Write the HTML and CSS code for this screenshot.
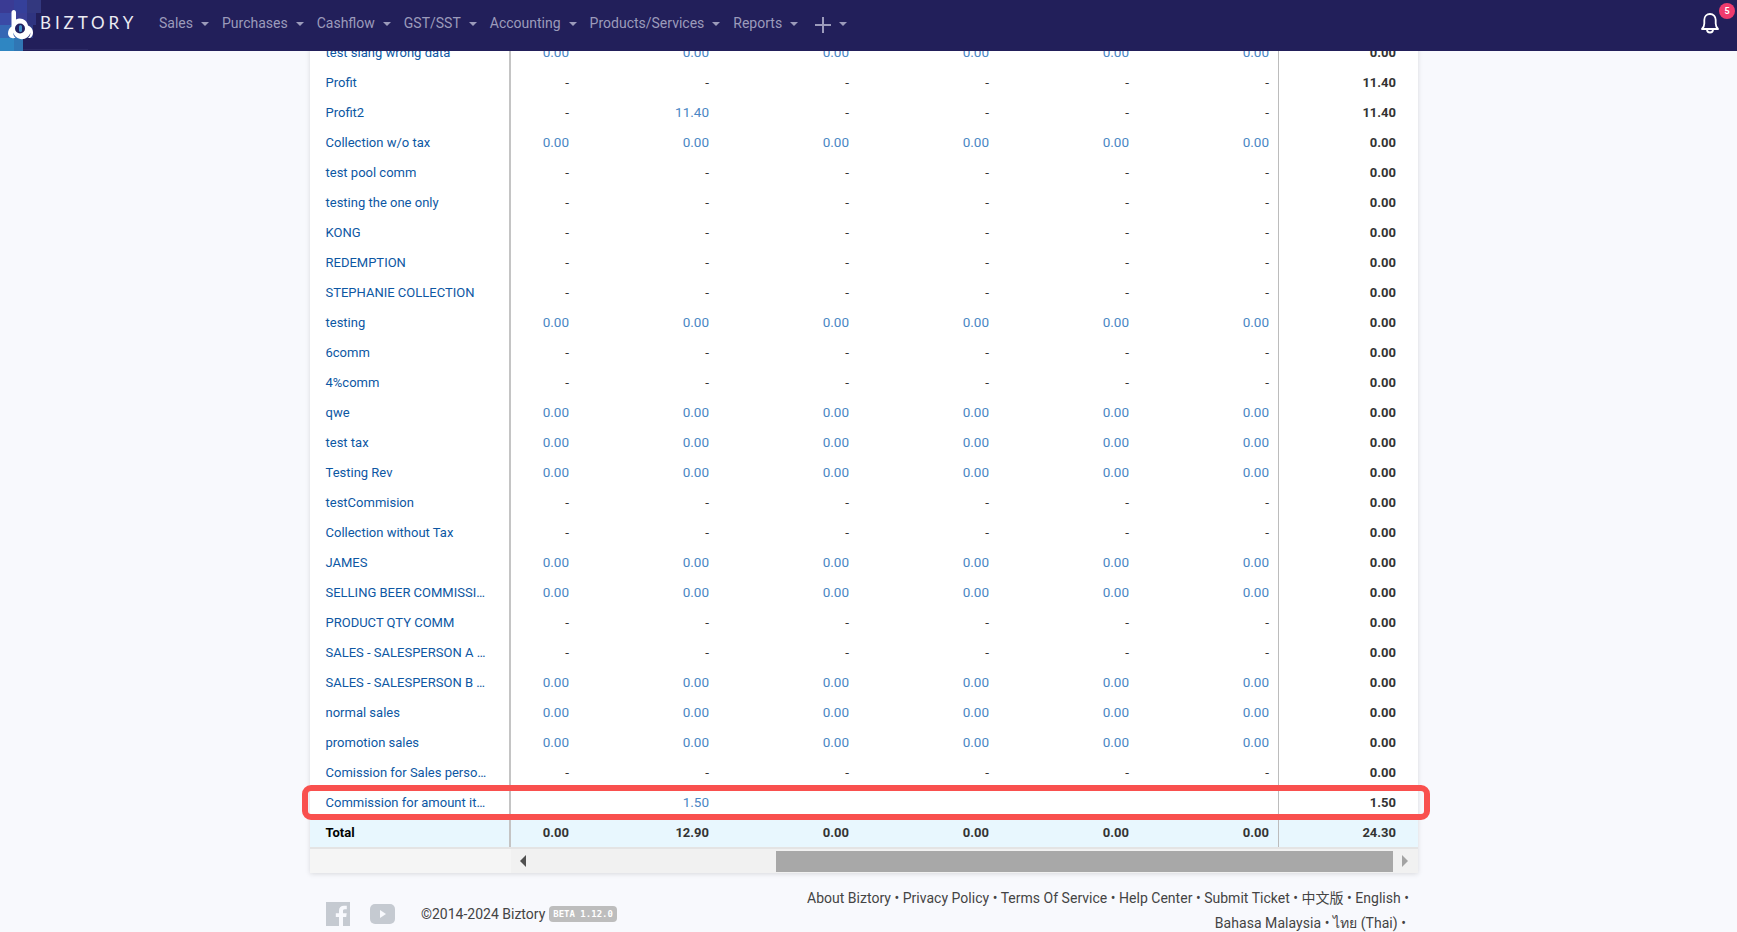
FILE: index.html
```html
<!DOCTYPE html>
<html lang="en">
<head>
<meta charset="utf-8">
<title>Biztory</title>
<link rel="stylesheet" href="styles.css">
</head>
<body>
<header class="topbar">
  <div class="brand">
    <svg class="mosaic" width="88" height="51" viewBox="0 0 88 51" aria-hidden="true">
      <rect x="23" y="49" width="65" height="1" fill="#2d2b66"/>
      <rect x="0" y="0" width="14" height="13" fill="#3a3b94"/><rect x="14" y="0" width="13" height="13" fill="#35409a"/><rect x="27" y="0" width="14" height="13" fill="#33387f"/>
      <rect x="0" y="13" width="14" height="12" fill="#3a4aa6"/><rect x="14" y="13" width="13" height="12" fill="#3a3f96"/><rect x="27" y="13" width="9" height="12" fill="#2f3480"/>
      <rect x="0" y="25" width="14" height="13" fill="#3567b4"/><rect x="14" y="25" width="13" height="13" fill="#3459a8"/><rect x="27" y="25" width="6" height="13" fill="#2e3a84"/>
      <rect x="0" y="38" width="14" height="13" fill="#2f86c2"/><rect x="14" y="38" width="9" height="13" fill="#3076b4"/>
    </svg>
    <svg class="mark" width="28" height="30" viewBox="0 0 28 30" aria-hidden="true">
      <path fill="#fff" d="M4.5 2.5c0-1.300 1-2.500 2.300-2.500S9 1 9 2.500V9.500c1.200-.6 2.500-.9 3.800-.9 4.200 0 7.500 3 8.200 7 2.700 1 5 3.700 5 6.800 0 3.500-2 5.600-4 5.600h-1c1.800-1.300 2.600-3.200 2.300-5.400-.8 4-4.300 6.600-8.400 6.600-4.200 0-7.700-2.700-8.500-6.600-.3 2.200.5 4.100 2.300 5.400h-1.500C4 28.900 1 26.800 1 23.300c0-2.800 1.500-5.400 3.500-6.800Z"/>
      <circle cx="13" cy="18.500" r="5" fill="#222060"/>
      <rect x="12" y="15" width="3" height="7" rx="1.500" fill="#3f8fc8"/>
    </svg>
    <span class="wordmark">BIZTORY</span>
  </div>
  <nav class="nav">
    <a class="nav-item">Sales<i class="caret"></i></a>
    <a class="nav-item">Purchases<i class="caret"></i></a>
    <a class="nav-item">Cashflow<i class="caret"></i></a>
    <a class="nav-item">GST/SST<i class="caret"></i></a>
    <a class="nav-item">Accounting<i class="caret"></i></a>
    <a class="nav-item">Products/Services<i class="caret"></i></a>
    <a class="nav-item">Reports<i class="caret"></i></a>
    <a class="nav-item nav-add">
      <svg class="plus" width="16" height="16" viewBox="0 0 16 16" aria-hidden="true"><path d="M8 0v16M0 8h16" stroke="currentColor" stroke-width="2" fill="none"/></svg><i class="caret"></i>
    </a>
  </nav>
  <div class="bell">
    <svg width="20" height="22" viewBox="0 0 20 22" aria-hidden="true"><path d="M2 17c1.500-1.500 2.300-3 2.300-5.500V8c0-3.500 2.500-6 5.700-6s5.700 2.500 5.700 6v3.500c0 2.500.8 4 2.300 5.500ZM7 17.500c0 2 1.300 3 3 3s3-1 3-3" fill="none" stroke="#fff" stroke-width="1.800" stroke-linejoin="round"/></svg>
    <span class="badge">5</span>
  </div>
</header>

<main class="page">
  <section class="panel">
    <table class="report">
      <colgroup>
        <col class="c-label"><col class="c-first"><col class="c-val"><col class="c-val"><col class="c-val"><col class="c-val"><col class="c-val"><col class="c-total">
      </colgroup>
      <tbody>
        <tr><th>test slang wrong data</th><td class="n">0.00</td><td class="n">0.00</td><td class="n">0.00</td><td class="n">0.00</td><td class="n">0.00</td><td class="n">0.00</td><td class="t">0.00</td></tr>
        <tr><th>Profit</th><td>-</td><td>-</td><td>-</td><td>-</td><td>-</td><td>-</td><td class="t">11.40</td></tr>
        <tr><th>Profit2</th><td>-</td><td class="n">11.40</td><td>-</td><td>-</td><td>-</td><td>-</td><td class="t">11.40</td></tr>
        <tr><th>Collection w/o tax</th><td class="n">0.00</td><td class="n">0.00</td><td class="n">0.00</td><td class="n">0.00</td><td class="n">0.00</td><td class="n">0.00</td><td class="t">0.00</td></tr>
        <tr><th>test pool comm</th><td>-</td><td>-</td><td>-</td><td>-</td><td>-</td><td>-</td><td class="t">0.00</td></tr>
        <tr><th>testing the one only</th><td>-</td><td>-</td><td>-</td><td>-</td><td>-</td><td>-</td><td class="t">0.00</td></tr>
        <tr><th>KONG</th><td>-</td><td>-</td><td>-</td><td>-</td><td>-</td><td>-</td><td class="t">0.00</td></tr>
        <tr><th>REDEMPTION</th><td>-</td><td>-</td><td>-</td><td>-</td><td>-</td><td>-</td><td class="t">0.00</td></tr>
        <tr><th>STEPHANIE COLLECTION</th><td>-</td><td>-</td><td>-</td><td>-</td><td>-</td><td>-</td><td class="t">0.00</td></tr>
        <tr><th>testing</th><td class="n">0.00</td><td class="n">0.00</td><td class="n">0.00</td><td class="n">0.00</td><td class="n">0.00</td><td class="n">0.00</td><td class="t">0.00</td></tr>
        <tr><th>6comm</th><td>-</td><td>-</td><td>-</td><td>-</td><td>-</td><td>-</td><td class="t">0.00</td></tr>
        <tr><th>4%comm</th><td>-</td><td>-</td><td>-</td><td>-</td><td>-</td><td>-</td><td class="t">0.00</td></tr>
        <tr><th>qwe</th><td class="n">0.00</td><td class="n">0.00</td><td class="n">0.00</td><td class="n">0.00</td><td class="n">0.00</td><td class="n">0.00</td><td class="t">0.00</td></tr>
        <tr><th>test tax</th><td class="n">0.00</td><td class="n">0.00</td><td class="n">0.00</td><td class="n">0.00</td><td class="n">0.00</td><td class="n">0.00</td><td class="t">0.00</td></tr>
        <tr><th>Testing Rev</th><td class="n">0.00</td><td class="n">0.00</td><td class="n">0.00</td><td class="n">0.00</td><td class="n">0.00</td><td class="n">0.00</td><td class="t">0.00</td></tr>
        <tr><th>testCommision</th><td>-</td><td>-</td><td>-</td><td>-</td><td>-</td><td>-</td><td class="t">0.00</td></tr>
        <tr><th>Collection without Tax</th><td>-</td><td>-</td><td>-</td><td>-</td><td>-</td><td>-</td><td class="t">0.00</td></tr>
        <tr><th>JAMES</th><td class="n">0.00</td><td class="n">0.00</td><td class="n">0.00</td><td class="n">0.00</td><td class="n">0.00</td><td class="n">0.00</td><td class="t">0.00</td></tr>
        <tr><th>SELLING BEER COMMISSI…</th><td class="n">0.00</td><td class="n">0.00</td><td class="n">0.00</td><td class="n">0.00</td><td class="n">0.00</td><td class="n">0.00</td><td class="t">0.00</td></tr>
        <tr><th>PRODUCT QTY COMM</th><td>-</td><td>-</td><td>-</td><td>-</td><td>-</td><td>-</td><td class="t">0.00</td></tr>
        <tr><th>SALES - SALESPERSON A …</th><td>-</td><td>-</td><td>-</td><td>-</td><td>-</td><td>-</td><td class="t">0.00</td></tr>
        <tr><th>SALES - SALESPERSON B …</th><td class="n">0.00</td><td class="n">0.00</td><td class="n">0.00</td><td class="n">0.00</td><td class="n">0.00</td><td class="n">0.00</td><td class="t">0.00</td></tr>
        <tr><th>normal sales</th><td class="n">0.00</td><td class="n">0.00</td><td class="n">0.00</td><td class="n">0.00</td><td class="n">0.00</td><td class="n">0.00</td><td class="t">0.00</td></tr>
        <tr><th>promotion sales</th><td class="n">0.00</td><td class="n">0.00</td><td class="n">0.00</td><td class="n">0.00</td><td class="n">0.00</td><td class="n">0.00</td><td class="t">0.00</td></tr>
        <tr><th>Comission for Sales perso…</th><td>-</td><td>-</td><td>-</td><td>-</td><td>-</td><td>-</td><td class="t">0.00</td></tr>
        <tr><th>Commission for amount it…</th><td></td><td class="n">1.50</td><td></td><td></td><td></td><td></td><td class="t">1.50</td></tr>
        <tr class="sum"><th>Total</th><td>0.00</td><td>12.90</td><td>0.00</td><td>0.00</td><td>0.00</td><td>0.00</td><td class="t">24.30</td></tr>
      </tbody>
    </table>
    <div class="hscroll">
      <div class="hscroll-gap"></div>
      <div class="hscroll-track">
        <i class="arrow arrow-left"></i>
        <div class="thumb"></div>
        <i class="arrow arrow-right"></i>
      </div>
    </div>
    <div class="highlight"></div>
  </section>

  <footer class="footer">
    <div class="footer-left">
      <svg class="fb" width="24" height="24" viewBox="0 0 24 24" aria-hidden="true"><path fill="#c5cad1" d="M0 0h24v24h-7v-9h3.200l.5-3.800H17V9c0-1.100.3-1.800 1.800-1.800h2V3.800c-.4 0-1.500-.1-2.900-.1-2.900 0-4.900 1.700-4.900 5v2.500H9.800V15H13v9H0Z"/></svg>
      <svg class="yt" width="25" height="20" viewBox="0 0 25 20" aria-hidden="true"><rect width="25" height="20" rx="5" fill="#c5cad1"/><path d="M10 6l6 4-6 4Z" fill="#f8f9fd"/></svg>
      <span class="copy">©2014-2024 Biztory</span>
      <span class="ver">BETA 1.12.0</span>
    </div>
    <div class="footer-links">
      <div class="links-wide">About Biztory • Privacy Policy • Terms Of Service • Help Center • Submit Ticket • 中文版 • English •</div>
      <div class="links-narrow">Bahasa Malaysia • ไทย (Thai) •</div>
    </div>
  </footer>
</main>
</body>
</html>
```
FILE: styles.css
```css
* { box-sizing: border-box; }
html, body { height: 100%; }
body {
  margin: 0;
  overflow: hidden;
  background: #f8f9fd;
  font-family: Roboto, "Noto Sans CJK SC", "Noto Sans", sans-serif;
  font-size: 13.500px;
  color: #333;
}

/* top bar */
.topbar {
  position: absolute;
  top: 0;
  left: 0;
  right: 0;
  z-index: 5;
  height: 51px;
  display: flex;
  align-items: flex-start;
  background: #221f5a;
}
.brand {
  position: relative;
  width: 159px;
  height: 51px;
  flex: none;
}
.mosaic { position: absolute; left: 0; top: 0; }
.mark { position: absolute; left: 7px; top: 10px; }
.wordmark {
  position: absolute;
  left: 40px;
  top: 13px;
  font-family: Lato, "Liberation Sans", sans-serif;
  font-size: 17px;
  line-height: 20px;
  letter-spacing: 3.900px;
  color: #ecebf3;
}
.nav {
  display: flex;
  align-items: center;
  gap: 13px;
  height: 46px;
}
.nav-item {
  display: flex;
  align-items: center;
  color: #9c9bbb;
  font-size: 14px;
}
.nav-add { margin-left: 4px; }
.caret {
  display: block;
  width: 0;
  height: 0;
  margin-left: 8px;
  margin-top: 2px;
  border-left: 4px solid transparent;
  border-right: 4px solid transparent;
  border-top: 4px solid #9c9bbb;
}
.plus { margin-top: 3px; }
.bell {
  position: relative;
  margin-left: auto;
  margin-right: 17px;
  margin-top: 12px;
  width: 20px;
  height: 22px;
}
.bell svg { display: block; }
.badge {
  position: absolute;
  left: 19px;
  top: -9px;
  width: 16px;
  height: 16px;
  border-radius: 50%;
  background: #ef3b6d;
  color: #fff;
  font-size: 9px;
  font-weight: 700;
  line-height: 16px;
  text-align: center;
}

/* report */
.page {
  padding: 37px 319px 0 310px;
}
.panel {
  position: relative;
  background: #fff;
  box-shadow: 0 1px 5px rgba(0, 0, 0, .13);
}
.report {
  width: 1108px;
  table-layout: fixed;
  border-collapse: separate;
  border-spacing: 0;
}
.c-label { width: 201px; }
.c-first { width: 67px; }
.c-val { width: 140px; }
.c-total { width: 140px; }
.report th, .report td {
  height: 30px;
  padding: 0 9px 0 0;
  font-weight: 400;
  text-align: right;
  white-space: nowrap;
  line-height: 30px;
}
.report th {
  padding: 1px 0 0 15.500px;
  line-height: 29px;
  text-align: left;
  font-size: 13px;
  color: #0d57a3;
  border-right: 2px solid #c4c4c4;
}
.report .n { color: #4a86c4; }
.report .t {
  padding: 1px 22px 0 0;
  line-height: 29px;
  font-size: 13px;
  font-weight: 700;
  color: #333;
  border-left: 1px solid #bcbcbc;
}
.sum th, .sum td { background: #e8f7fe; }
.report .sum th { color: #000; font-weight: 700; }
.report .sum td { font-size: 13px; font-weight: 700; color: #333; padding-top: 1px; line-height: 29px; }

.hscroll {
  display: flex;
  height: 26px;
  border-top: 2px solid #e4e4e4;
  background: #f5f5f5;
}
.hscroll-gap { width: 201px; flex: none; }
.hscroll-track {
  flex: 1;
  display: flex;
  align-items: center;
  background: #f1f1f1;
}
.thumb {
  width: 617px;
  height: 21px;
  margin-left: 250px;
  background: #a8a8a8;
}
.arrow {
  display: block;
  width: 0;
  height: 0;
  border-top: 6px solid transparent;
  border-bottom: 6px solid transparent;
}
.arrow-left { margin-left: 9px; border-right: 6px solid #505050; }
.arrow-right { margin-left: 9px; border-left: 6px solid #a3a3a3; }

.highlight {
  position: absolute;
  left: -8px;
  top: 748px;
  width: 1128px;
  height: 35px;
  border: 6.500px solid #f9504e;
  border-radius: 9px;
}

/* footer */
.footer {
  display: flex;
  justify-content: space-between;
  height: 70px;
  padding: 13px 9px 0 16px;
}
.footer-left {
  display: flex;
  align-items: center;
  height: 34px;
  margin-top: 11px;
}
.yt { margin-left: 20px; }
.copy { margin-left: 26px; color: #444; font-size: 14px; }
.ver {
  margin-left: 4px;
  padding: 0 4px;
  height: 16px;
  border-radius: 4px;
  background: #bdbdbd;
  color: #fff;
  font-family: "DejaVu Sans Mono", "Liberation Mono", monospace;
  font-size: 9px;
  font-weight: 700;
  line-height: 16px;
}
.footer-links {
  text-align: right;
  color: #444;
  font-size: 14px;
  line-height: 25px;
}
.links-wide { letter-spacing: .02px; }
.links-narrow { margin-right: 3px; letter-spacing: .05px; }
```
